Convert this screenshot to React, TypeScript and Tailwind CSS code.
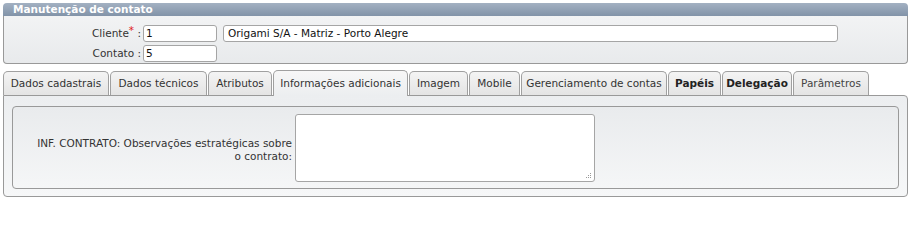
import React from 'react';

const tabs = [
  { label: 'Dados cadastrais', w: 'w-[106px]' },
  { label: 'Dados técnicos', w: 'w-[97px]' },
  { label: 'Atributos', w: 'w-[64px]' },
  { label: 'Informações adicionais', w: 'w-[135px]', active: true },
  { label: 'Imagem', w: 'w-[59px]' },
  { label: 'Mobile', w: 'w-[51px]' },
  { label: 'Gerenciamento de contas', w: 'w-[146px]' },
  { label: 'Papéis', w: 'w-[53px]', bold: true },
  { label: 'Delegação', w: 'w-[70px]', bold: true },
  { label: 'Parâmetros', w: 'w-[76px]', muted: true },
];

export default function App() {
  return (
    <div
      className="w-[911px] h-[200px] overflow-hidden bg-white pt-[3px] pl-[3px] text-[10.5px] text-[#333]"
      style={{ fontFamily: '"DejaVu Sans", Verdana, sans-serif' }}
    >
      <div className="w-[905px]">
        {/* cabeçalho */}
        <div className="h-[13px] rounded-t-[4px] bg-gradient-to-b from-[#a3b1c2] to-[#8293a8] pl-[10px] text-[10.5px] font-bold leading-[13px] text-white">
          Manutenção de contato
        </div>
        <div className="h-[48px] rounded-b-[4px] border border-t-0 border-[#999] bg-gradient-to-b from-[#f2f3f4] to-[#e8eaec] pt-[9px]">
          <div className="flex items-center h-[17px]">
            <div className="w-[139px] text-right pr-[2px]">
              Cliente<span className="text-[#e02020] relative -top-[3px]">*</span> :
            </div>
            <div className="w-[74px] h-[17px] rounded-[3px] border border-[#a5a5a5] bg-white pl-[2px] leading-[15px] text-[#111]">1</div>
            <div className="ml-[6px] w-[615px] h-[17px] rounded-[3px] border border-[#a5a5a5] bg-white pl-[4px] leading-[15px] text-[#111]">
              Origami S/A - Matriz - Porto Alegre
            </div>
          </div>
          <div className="flex items-center h-[17px] mt-[3px]">
            <div className="w-[139px] text-right pr-[2px]">Contato :</div>
            <div className="w-[74px] h-[17px] rounded-[3px] border border-[#a5a5a5] bg-white pl-[2px] leading-[15px] text-[#111]">5</div>
          </div>
        </div>

        {/* abas */}
        <div className="mt-[6px] flex items-end gap-[1px] h-[25px]">
          {tabs.map((t) => (
            <div
              key={t.label}
              className={`${t.w} shrink-0 rounded-t-[5px] border border-[#a0a0a0] text-center ${
                t.active
                  ? 'relative z-10 h-[26px] border-b-0 bg-gradient-to-b from-[#f7f7f7] to-[#eceef0] leading-[25px] -mb-[1px]'
                  : 'h-[24px] border-b-0 bg-gradient-to-b from-[#f4f4f4] to-[#e4e4e4] leading-[23px]'
              } ${t.bold ? 'font-bold text-[#222]' : t.muted ? 'text-[#444]' : 'text-[#333]'}`}
            >
              {t.label}
            </div>
          ))}
        </div>
        <div className="h-[102px] rounded-b-[4px] rounded-tr-[4px] border border-[#999] bg-gradient-to-b from-[#eceef0] to-[#f6f7f8] px-[8px] pt-[10px]">
          <div className="h-[83px] rounded-[4px] border border-[#999] bg-gradient-to-b from-[#e9ebed] to-[#f5f6f7] flex pt-[7px]">
            <div className="w-[282px] pt-[23px] text-right leading-[13px] pr-[3px]">
              INF. CONTRATO: Observações estratégicas sobre
              <br />o contrato:
            </div>
            <div className="relative w-[300px] h-[68px] rounded-[3px] border border-[#a5a5a5] bg-white">
              <svg className="absolute right-[2px] bottom-[2px]" width="7" height="7" viewBox="0 0 7 7">
                <rect x="5" y="1" width="1" height="1" fill="#999" />
                <rect x="3" y="3" width="1" height="1" fill="#999" />
                <rect x="5" y="3" width="1" height="1" fill="#999" />
                <rect x="1" y="5" width="1" height="1" fill="#999" />
                <rect x="3" y="5" width="1" height="1" fill="#999" />
                <rect x="5" y="5" width="1" height="1" fill="#999" />
              </svg>
            </div>
          </div>
        </div>
      </div>
    </div>
  );
}
